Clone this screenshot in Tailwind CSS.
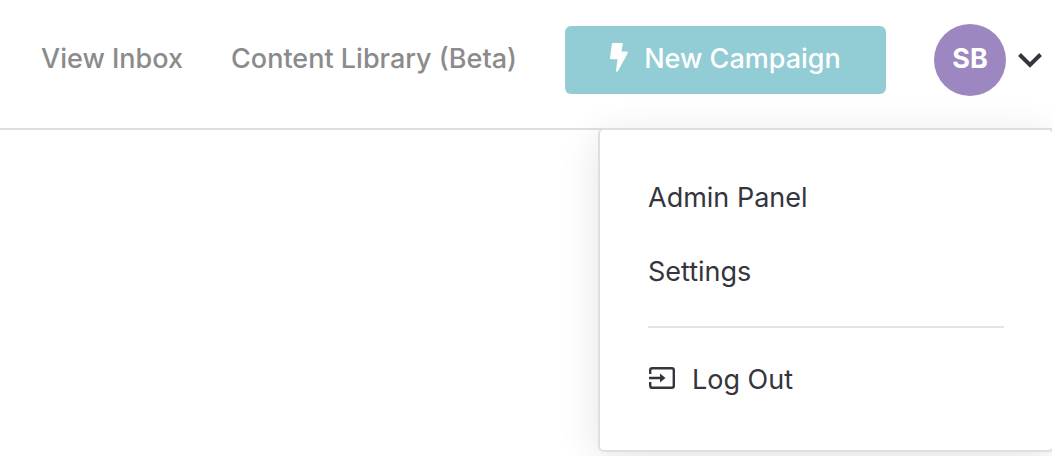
<!DOCTYPE html>
<html lang="en">
<head>
  <meta charset="UTF-8" />
  <meta name="viewport" content="width=device-width, initial-scale=1.0" />
  <title>Campaigns</title>
  <script src="https://cdn.jsdelivr.net/npm/@tailwindcss/browser@4"></script>
</head>
<body class="min-h-screen bg-white font-['Inter','Liberation_Sans',sans-serif] text-[27px] leading-10 text-[#35353d] overflow-hidden">

  <header class="relative border-b-2 border-[#dfdfdf]">
    <div class="flex items-center justify-end gap-12 pt-6 pb-8 pr-[10px] whitespace-nowrap">
      <nav class="flex gap-12 pb-0.5 font-medium text-[#8b8b8b]">
        <a href="#">View Inbox</a>
        <a href="#">Content Library (Beta)</a>
      </nav>

      <button type="button" class="flex items-center justify-center gap-4 w-[321px] h-[68px] pb-0.5 rounded-md bg-[#92ccd4] font-medium text-white">
        <svg class="w-[18px] h-8" viewBox="0 0 18 32" fill="currentColor" aria-hidden="true">
          <path d="M3.200 0h8.600c.8 0 1.200.6 1 1.300L11.400 8.600h5.200c1 0 1.500.800 1.100 1.600L8 28c-.6 1.200-2.300.800-2-.6L7.500 16.200H1.100C.4 16.200-.1 15.600 0 14.900L1.900 1.100C2 .4 2.500 0 3.200 0z" />
        </svg>
        New Campaign
      </button>

      <button type="button" aria-haspopup="true" aria-expanded="true" aria-label="Account menu" class="flex items-center gap-3">
        <span class="flex items-center justify-center size-[72px] pb-0.5 rounded-full bg-[#9d87c0] font-bold text-white">SB</span>
        <svg class="w-6 h-4" viewBox="0 0 24 16" fill="none" stroke="currentColor" stroke-width="4" aria-hidden="true">
          <path d="M1.500 2.500L12 13 22.500 2.500" />
        </svg>
      </button>
    </div>

    <!-- Account menu -->
    <div class="absolute top-full -right-0.5 w-[456px] rounded-md border-2 border-[#dfdfdf] bg-white px-12 pt-12 pb-[50px] shadow-[0_8px_40px_rgba(0,0,0,0.11)]">
      <div class="flex flex-col gap-[34px] pb-[34px] border-b-2 border-[#e4e4e4]">
        <a href="#">Admin Panel</a>
        <a href="#">Settings</a>
      </div>
      <a href="#" class="flex items-center gap-4 pt-8">
        <svg class="w-7 h-[26px]" viewBox="0 0 28 26" fill="none" stroke="currentColor" stroke-width="2.400" aria-hidden="true">
          <path d="M2.200 7V3.200Q2.200 1.200 4.200 1.200H23.800Q25.800 1.200 25.800 3.200V18.800Q25.800 20.800 23.800 20.800H4.200Q2.200 20.800 2.200 18.800V15M1 11H13" />
          <path d="M12 6.500L17.500 11 12 15.500z" fill="currentColor" stroke="none" />
        </svg>
        Log Out
      </a>
    </div>
  </header>

</body>
</html>
